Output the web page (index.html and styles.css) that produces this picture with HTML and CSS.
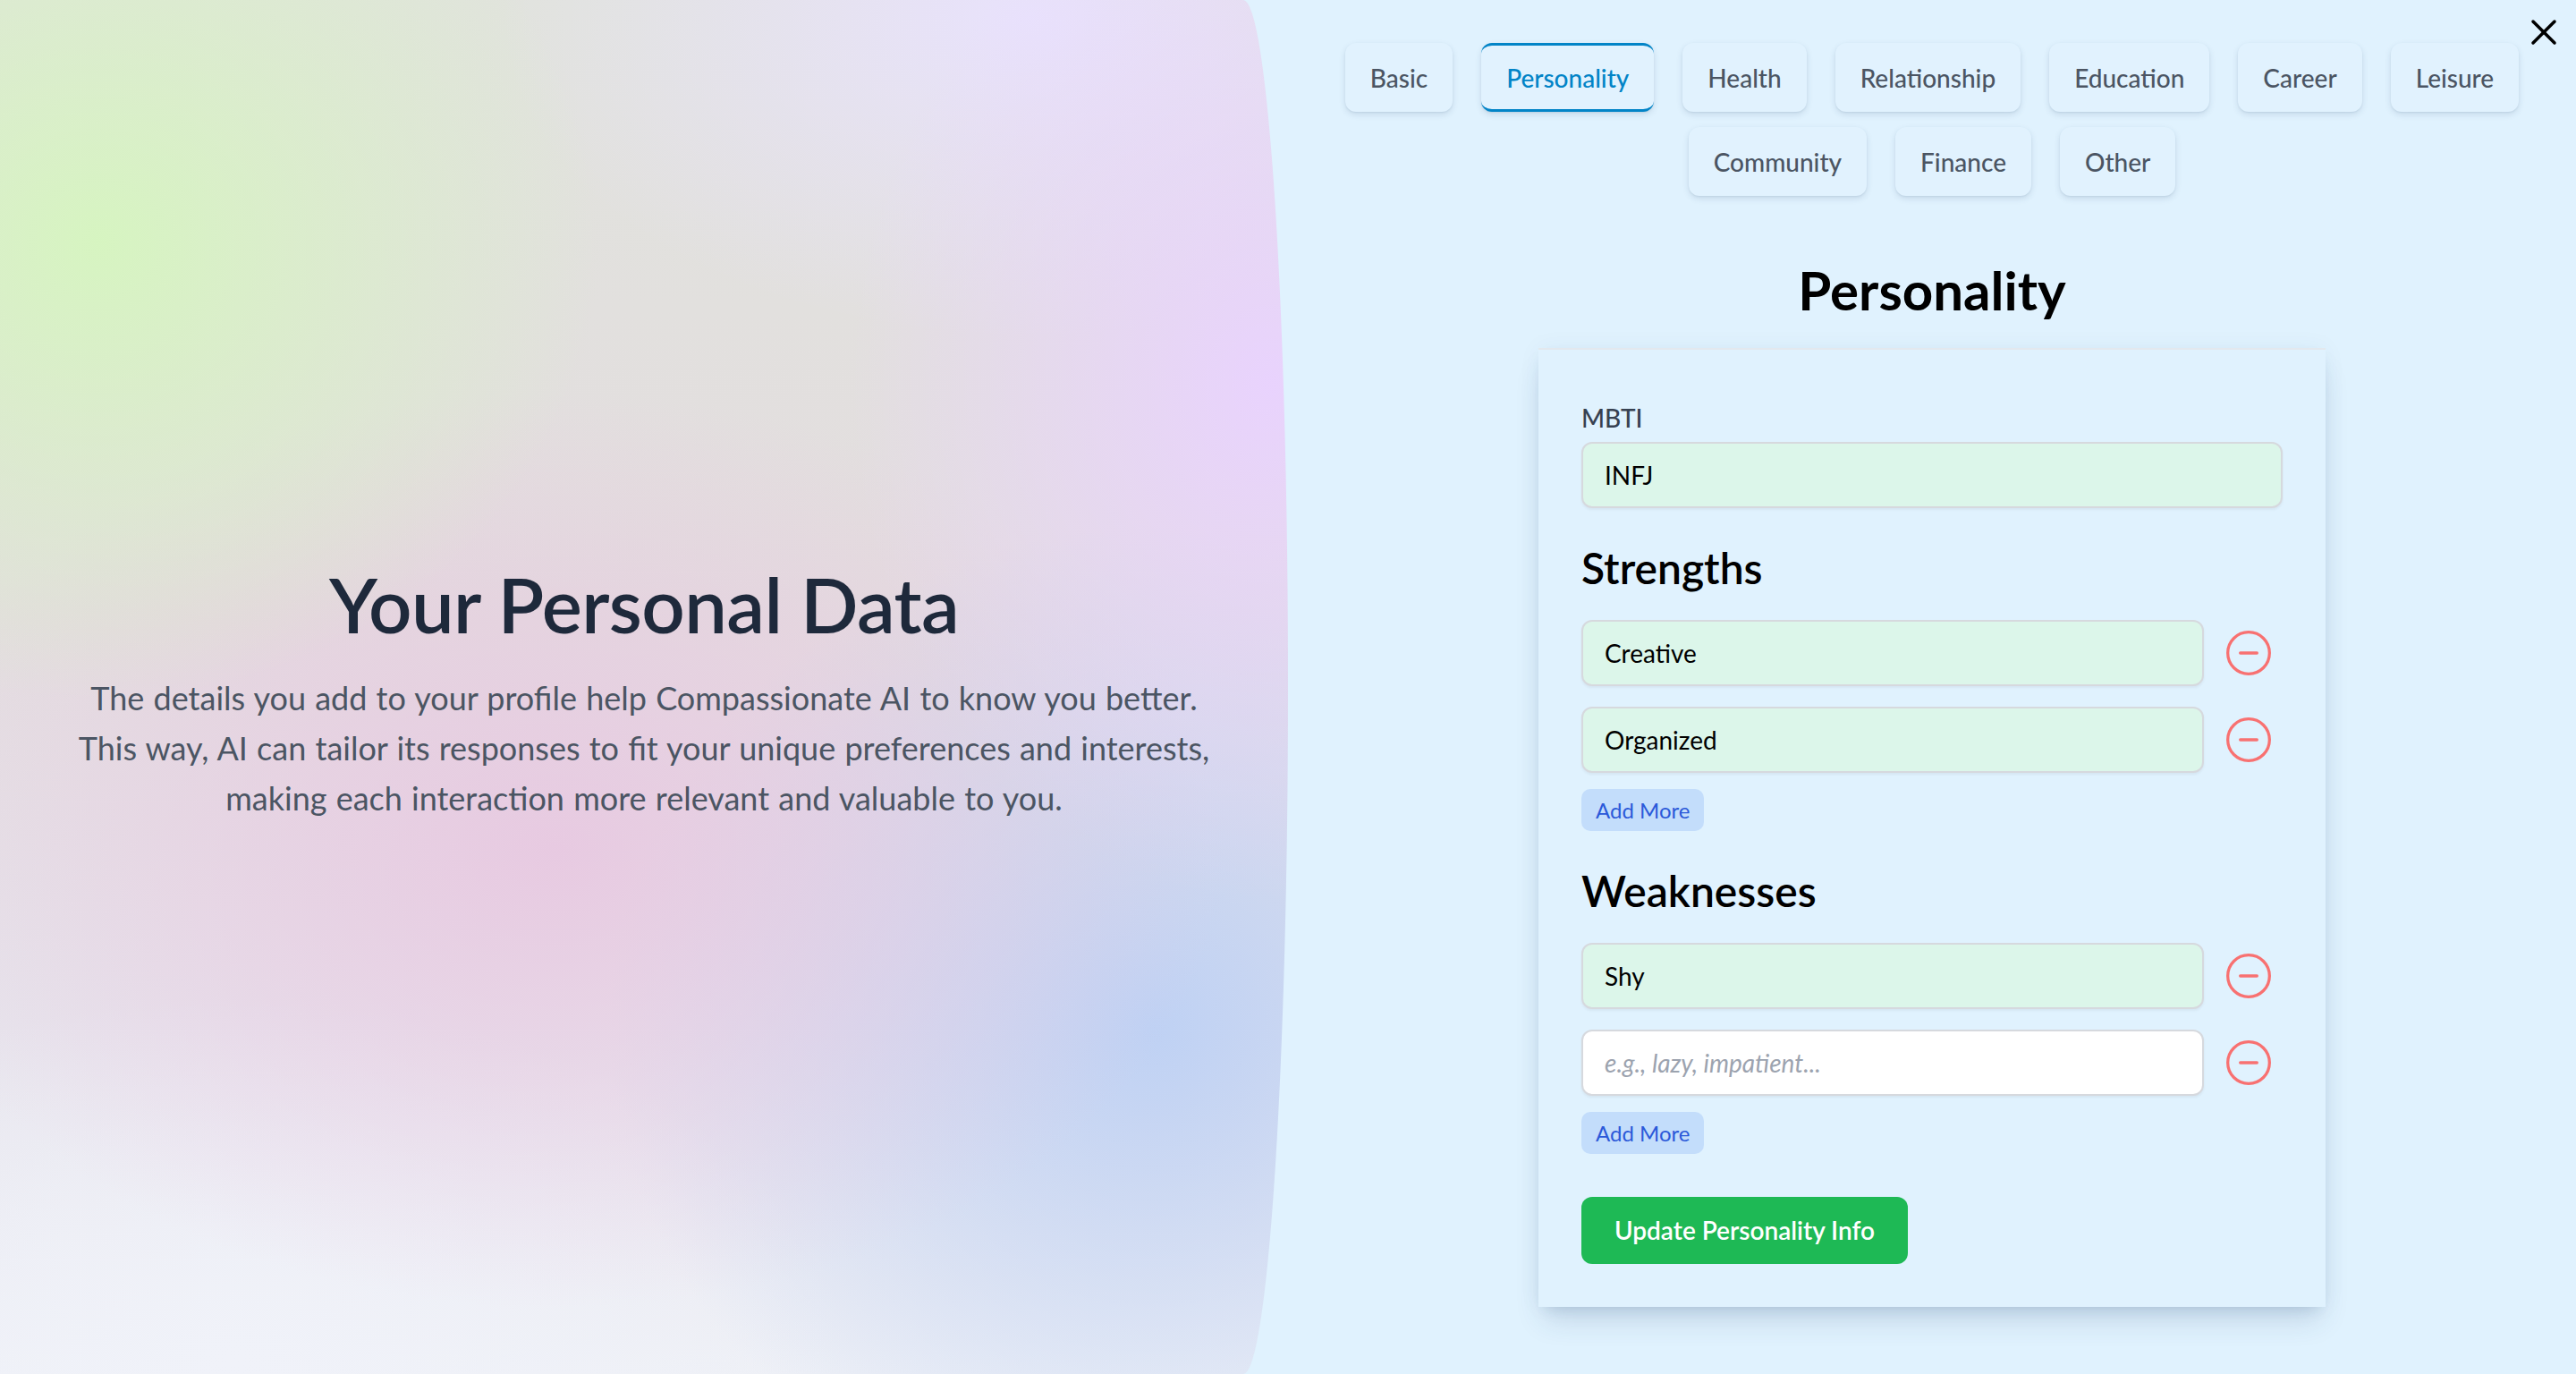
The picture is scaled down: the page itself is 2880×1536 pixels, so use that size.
FILE: index.html
```html
<!DOCTYPE html>
<html lang="en">
<head>
<meta charset="utf-8">
<title>Your Personal Data</title>
<link rel="stylesheet" href="styles.css">
</head>
<body>
<div class="page">
  <aside class="hero">
    <div class="hero-inner">
      <h1 class="hero-title">Your Personal Data</h1>
      <p class="hero-text">The details you add to your profile help Compassionate AI to know you better. This way, AI can tailor its responses to fit your unique preferences and interests, making each interaction more relevant and valuable to you.</p>
    </div>
  </aside>

  <main class="editor">
    <button class="close" type="button" aria-label="Close">
      <svg viewBox="0 0 24 24" width="48" height="48" fill="none" stroke="#000" stroke-width="1.75" stroke-linecap="round"><path d="M18 6 6 18"/><path d="m6 6 12 12"/></svg>
    </button>

    <nav class="tabs">
      <button class="tab" type="button">Basic</button>
      <button class="tab active" type="button">Personality</button>
      <button class="tab" type="button">Health</button>
      <button class="tab" type="button">Relationship</button>
      <button class="tab" type="button">Education</button>
      <button class="tab" type="button">Career</button>
      <button class="tab" type="button">Leisure</button>
      <button class="tab" type="button">Community</button>
      <button class="tab" type="button">Finance</button>
      <button class="tab" type="button">Other</button>
    </nav>

    <h2 class="section-title">Personality</h2>

    <form class="card">
      <div class="field">
        <label class="label" for="mbti">MBTI</label>
        <input class="input filled" id="mbti" type="text" value="INFJ">
      </div>

      <h3 class="group-title">Strengths</h3>
      <div class="rows">
        <div class="row">
          <input class="input filled" type="text" value="Creative">
          <button class="remove" type="button" aria-label="Remove"><svg viewBox="0 0 24 24" width="56" height="56" fill="none" stroke="#f87171" stroke-width="1.4" stroke-linecap="round"><circle cx="12" cy="12" r="10"/><path d="M8 12h8"/></svg></button>
        </div>
        <div class="row">
          <input class="input filled" type="text" value="Organized">
          <button class="remove" type="button" aria-label="Remove"><svg viewBox="0 0 24 24" width="56" height="56" fill="none" stroke="#f87171" stroke-width="1.4" stroke-linecap="round"><circle cx="12" cy="12" r="10"/><path d="M8 12h8"/></svg></button>
        </div>
      </div>
      <button class="add" type="button">Add More</button>

      <h3 class="group-title">Weaknesses</h3>
      <div class="rows">
        <div class="row">
          <input class="input filled" type="text" value="Shy">
          <button class="remove" type="button" aria-label="Remove"><svg viewBox="0 0 24 24" width="56" height="56" fill="none" stroke="#f87171" stroke-width="1.4" stroke-linecap="round"><circle cx="12" cy="12" r="10"/><path d="M8 12h8"/></svg></button>
        </div>
        <div class="row">
          <input class="input" type="text" placeholder="e.g., lazy, impatient...">
          <button class="remove" type="button" aria-label="Remove"><svg viewBox="0 0 24 24" width="56" height="56" fill="none" stroke="#f87171" stroke-width="1.4" stroke-linecap="round"><circle cx="12" cy="12" r="10"/><path d="M8 12h8"/></svg></button>
        </div>
      </div>
      <button class="add" type="button">Add More</button>

      <button class="submit" type="button">Update Personality Info</button>
    </form>
  </main>
</div>
</body>
</html>
```

FILE: styles.css
```css
html, body {
  margin: 0;
  padding: 0;
  height: 100%;
}

body {
  font-family: Lato, "Open Sans", "Noto Sans", sans-serif;
  background: #e0f2fe;
  color: #111;
  overflow: hidden;
}

.page {
  display: flex;
  height: 1536px;
}

/* ---------- left hero ---------- */
.hero {
  flex: 0 0 1440px;
  width: 1440px;
  height: 100%;
  border-radius: 0 50px 50px 0 / 0 50% 50% 0;
  display: flex;
  align-items: center;
  justify-content: center;
  background:
    radial-gradient(ellipse 720px 660px at 110px 270px, rgba(214, 245, 192, 0.97), rgba(214, 245, 192, 0) 78%),
    radial-gradient(ellipse 620px 760px at 1420px 430px, rgba(233, 210, 255, 0.95), rgba(233, 210, 255, 0) 76%),
    radial-gradient(ellipse 940px 640px at 620px 950px, rgba(232, 196, 224, 0.8), rgba(232, 196, 224, 0) 80%),
    radial-gradient(ellipse 780px 720px at 1290px 1150px, rgba(190, 209, 244, 0.98), rgba(190, 209, 244, 0) 78%),
    radial-gradient(ellipse 760px 460px at 1150px 20px, rgba(233, 226, 254, 0.95), rgba(233, 226, 254, 0) 78%),
    radial-gradient(ellipse 900px 520px at 260px 1520px, rgba(240, 242, 249, 1), rgba(240, 242, 249, 0) 78%),
    linear-gradient(180deg, #e1e3dd 0%, #e3dddf 45%, #e7e4ec 75%, #eef0f6 100%);
}

.hero-inner {
  text-align: center;
  padding: 0 60px;
  margin-top: 8px;
}

.hero-title {
  margin: 0 0 25px;
  font-size: 85px;
  line-height: 103px;
  font-weight: 600;
  color: #1e293b;
  letter-spacing: -0.6px;
}

.hero-text {
  margin: 0 auto;
  max-width: 1290px;
  font-size: 36px;
  line-height: 56px;
  color: #4b5563;
  word-spacing: 1px;
}

/* ---------- right editor ---------- */
.editor {
  flex: 1;
  position: relative;
  display: flex;
  flex-direction: column;
  align-items: center;
  padding: 48px 60px 0;
}

.close {
  position: absolute;
  top: 12px;
  right: 12px;
  width: 48px;
  height: 48px;
  padding: 0;
  border: 0;
  background: transparent;
  cursor: pointer;
}

.close svg {
  display: block;
}

.tabs {
  width: 1320px;
  display: flex;
  flex-wrap: wrap;
  justify-content: center;
  gap: 17px 32px;
}

.tab {
  font-family: inherit;
  font-size: 28px;
  line-height: 40px;
  font-weight: 500;
  color: #4b5563;
  background: #e1f2fe;
  border: 0;
  border-top: 3px solid transparent;
  border-bottom: 3px solid transparent;
  border-radius: 12px;
  padding: 16px 28px 15px;
  box-shadow: 0 3px 7px rgba(30, 60, 100, 0.13), 0 1px 2px rgba(30, 60, 100, 0.08);
  cursor: pointer;
}

.tab.active {
  color: #0284c7;
  border-top-color: #0284c7;
  border-bottom-color: #0284c7;
}

.section-title {
  margin: 69px 0 29px;
  font-size: 60px;
  line-height: 72px;
  font-weight: 700;
  color: #000;
}

.card {
  width: 880px;
  box-sizing: border-box;
  background: #e0f2fe;
  border-top: 2px solid #e3e8ee;
  padding: 56px 48px 48px;
  box-shadow: 0 20px 30px -6px rgba(40, 70, 110, 0.16), 0 8px 14px -8px rgba(40, 70, 110, 0.14), 0 0 24px rgba(40, 70, 110, 0.05);
  display: flex;
  flex-direction: column;
  align-items: flex-start;
}

.field {
  width: 100%;
  display: flex;
  flex-direction: column;
}

.label {
  font-size: 28px;
  line-height: 40px;
  font-weight: 500;
  color: #374151;
  margin-bottom: 7px;
}

.input {
  box-sizing: border-box;
  width: 100%;
  height: 74px;
  padding: 0 24px;
  font-family: inherit;
  font-size: 28px;
  color: #000;
  background: #ffffff;
  border: 2px solid #d6d9de;
  border-radius: 12px;
  box-shadow: 0 2px 3px rgba(0, 0, 0, 0.05);
  outline: none;
}

.input.filled {
  background: #dcf6ea;
}

.input::placeholder {
  color: #9ca3af;
  font-style: italic;
}

.group-title {
  margin: 35px 0 26px;
  font-size: 48px;
  line-height: 64px;
  font-weight: 600;
  color: #000;
}

.rows {
  width: 100%;
  display: flex;
  flex-direction: column;
  gap: 23px;
}

.row {
  display: flex;
  align-items: center;
  gap: 22px;
  padding-right: 10px;
}

.row .input {
  flex: 1;
}

.remove {
  flex: 0 0 56px;
  width: 56px;
  height: 56px;
  padding: 0;
  border: 0;
  background: transparent;
  cursor: pointer;
}

.remove svg {
  display: block;
}

.add {
  margin-top: 18px;
  font-family: inherit;
  font-size: 24px;
  line-height: 31px;
  color: #2b59d9;
  background: #c3ddfb;
  border: 0;
  border-radius: 10px;
  padding: 8px 16px;
  cursor: pointer;
}

.submit {
  margin-top: 48px;
  font-family: inherit;
  font-size: 28px;
  line-height: 41px;
  font-weight: 600;
  color: #fff;
  background: #1eb955;
  border: 0;
  border-radius: 12px;
  padding: 17px 37px;
  cursor: pointer;
}
```
